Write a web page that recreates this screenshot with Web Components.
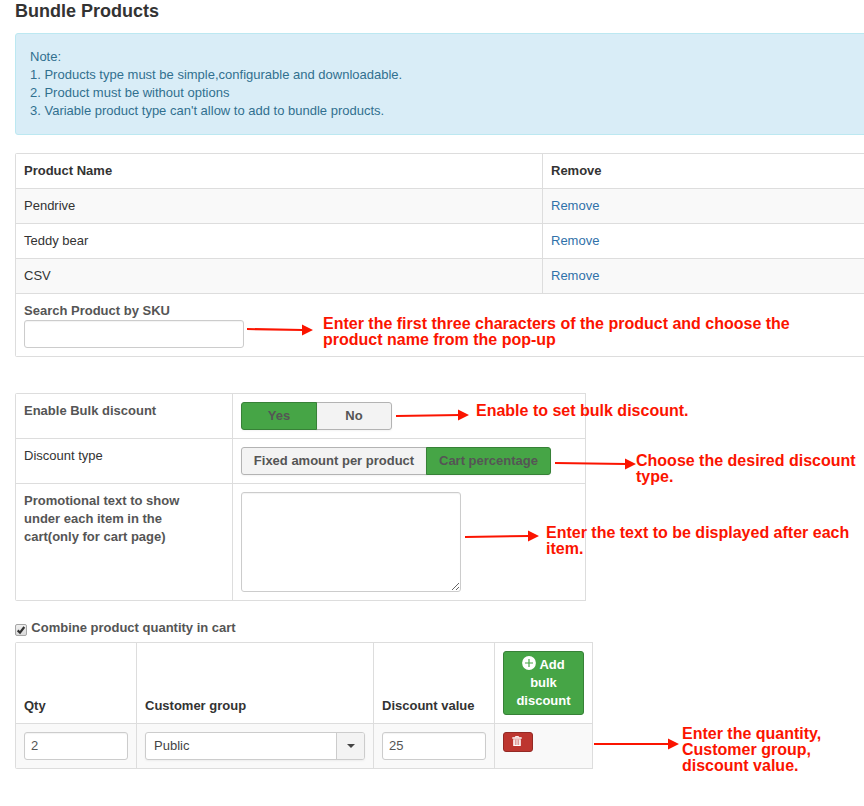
<!DOCTYPE html>
<html lang="en">
<head>
<meta charset="utf-8">
<title>Bundle Products</title>
<style>
html,body{margin:0;background:#fff;overflow:hidden}
body{font:13px/18px "Liberation Sans",Arial,sans-serif;color:#333;width:864px;height:806px}
</style>
</head>
<body>
<bundle-page></bundle-page>
<script>
const define=(name,html)=>{
  const t=document.createElement('template');t.innerHTML=html;
  customElements.define(name,class extends HTMLElement{
    constructor(){super();this.attachShadow({mode:'open'}).append(t.content.cloneNode(true));}
  });
};
define('note-alert',`<style>
:host{display:block;box-sizing:border-box;background:#d9edf7;border:1px solid #bce8f1;border-radius:3px;padding:14px;height:102px;color:#31708f}
</style><slot></slot>`);
define('line-grid',`<style>
:host{display:grid;gap:1px;padding:1px;background:#ddd;box-sizing:border-box;grid-template-columns:var(--cols);width:var(--grid-width);border-radius:2px 0 0 2px;overflow:hidden}
</style><slot></slot>`);
define('grid-cell',`<style>
:host{display:block;padding:8px;background:#fff;box-sizing:border-box}
:host([odd]){background:#f9f9f9}
:host([head]){font-weight:bold}
:host([label]){font-weight:bold;color:#555}
:host([bottom]){display:flex;align-items:flex-end}
:host([wide]){grid-column:1/-1}
</style><slot></slot>`);
define('remove-link',`<style>:host{color:#3071a9}</style><slot></slot>`);
define('text-box',`<style>
:host{display:block;box-sizing:border-box;width:var(--box-width,104px);height:28px;border:1px solid #ccc;border-radius:3px;background:#fff;padding:4px 6px;color:#555;box-shadow:inset 0 1px 1px rgba(0,0,0,.05)}
</style><slot></slot>`);
define('text-area',`<style>
:host{display:block;height:100px}
textarea{display:block;box-sizing:border-box;width:220px;height:100px;margin:0;border:1px solid #ccc;border-radius:3px;background:#fff;box-shadow:inset 0 1px 1px rgba(0,0,0,.05)}
</style><textarea></textarea>`);
define('toggle-group',`<style>:host{display:flex;height:28px}</style><slot></slot>`);
define('toggle-option',`<style>
:host{display:block;box-sizing:border-box;width:var(--option-width);height:28px;border:1px solid #b3b3b3;background:#f3f3f3;color:#555;font-weight:bold;text-align:center;line-height:26px;white-space:nowrap;box-shadow:0 1px 2px rgba(0,0,0,.05)}
:host([on]){background:#46a546;border-color:#378137;z-index:1}
:host([first]){border-radius:3px 0 0 3px}
:host([last]){border-radius:0 3px 3px 0;margin-left:-1px}
</style><slot></slot>`);
define('group-select',`<style>
:host{display:flex;box-sizing:border-box;width:220px;height:28px;border:1px solid #ccc;border-radius:3px;background:#fff;overflow:hidden;color:#444;box-shadow:0 1px 2px rgba(0,0,0,.05)}
.v{flex:1;padding:4px 8px}
.a{width:27px;border-left:1px solid #ccc;background:#f3f3f3;display:flex;align-items:center;justify-content:center}
</style><div class="v"><slot></slot></div><div class="a"><svg width="8" height="4"><path d="M0 0H8L4 4z" fill="#444"/></svg></div>`);
define('add-button',`<style>
:host{display:block;box-sizing:border-box;width:81px;height:64px;border:1px solid #378137;border-radius:3px;background:#46a546;color:#fff;padding:4px;text-align:center;font-weight:bold}
svg{vertical-align:-1px;margin-top:-3px}
.r{display:block;height:18px;white-space:nowrap}
</style><span class="r"><svg width="14" height="14" viewBox="0 0 14 14"><circle cx="7" cy="7" r="6.9" fill="#fff"/><path d="M7 3v8M3 7h8" stroke="#46a546" stroke-width="1.2"/></svg> Add</span><span class="r">bulk</span><span class="r">discount</span>`);
define('delete-button',`<style>
:host{display:flex;box-sizing:border-box;width:30px;height:20px;border:1px solid #942a25;border-radius:3px;background:#bd362f;justify-content:center;padding-top:3px;padding-right:2px}
</style><svg width="10" height="11" viewBox="0 0 10 11"><path d="M3.4 1.5V.6H6.6V1.5" fill="none" stroke="#fff"/><path d="M.3 1.2H9.7V2.8H.3zM1.2 3.2H8.8V10H1.2z" fill="#fff"/><path d="M3.3 3.6V9M5 3.6V9M6.7 3.6V9" stroke="#bd362f" stroke-width=".6"/></svg>`);
define('check-line',`<style>
:host{display:flex;height:18px;font-weight:bold;color:#555;gap:4.3px}
svg{margin-top:5px;flex:none}
</style><svg width="12" height="12" viewBox="0 0 12 12"><defs><linearGradient id="g" x2="0" y2="1"><stop stop-color="#f1f1f1"/><stop offset="1" stop-color="#d9d9d9"/></linearGradient></defs><rect x=".5" y=".5" width="11" height="11" rx="1.5" fill="url(#g)" stroke="#a6a6a6"/><path d="M2.7 6.4L5 8.7L9.3 3" fill="none" stroke="#333" stroke-width="2.2"/></svg><slot></slot>`);
define('call-out',`<style>
:host{position:absolute;font:bold 16px/16px "Liberation Sans",Arial,sans-serif;color:#fb1400;white-space:nowrap}
</style><slot></slot>`);
define('arrow-layer',`<style>:host{position:absolute;left:0;top:0;z-index:2}svg{display:block}</style>
<svg width="864" height="806" fill="#fb1400"><g stroke="#fb1400" stroke-width="2"><path d="M247 329L303 330"/><path d="M396 416L460 415"/><path d="M555 463L626 464"/><path d="M465 537L529 536"/><path d="M594 744H669"/></g>
<path d="M302 324.500L313 330L302 335.500zM458 409.500L469 415L458 420.500zM625 458.500L636 464L625 469.500zM528 530.500L539 536L528 541.500zM668 738.500L679 744L668 749.500z"/></svg>`);
define('bundle-page',`<style>
:host{display:block;position:relative;width:864px;height:806px;overflow:hidden;box-sizing:border-box;padding-left:15px}
h1{margin:0;font-size:18px;line-height:22px;height:33px}
note-alert,.p{width:900px}
.p{--grid-width:900px;--cols:526px 1fr;margin-top:18px}
.b{--grid-width:571px;--cols:216px 352px;margin-top:36px}
.q{--grid-width:578px;--cols:120px 236px 120px 97px;grid-template-rows:80px 44px;margin-top:5px}
check-line{margin-top:18px}
</style>
<h1>Bundle Products</h1>
<note-alert>Note:<br>1. Products type must be simple,configurable and downloadable.<br>2. Product must be without options<br>3. Variable product type can't allow to add to bundle products.</note-alert>
<line-grid class="p">
<grid-cell head>Product Name</grid-cell><grid-cell head>Remove</grid-cell>
<grid-cell odd>Pendrive</grid-cell><grid-cell odd><remove-link>Remove</remove-link></grid-cell>
<grid-cell>Teddy bear</grid-cell><grid-cell><remove-link>Remove</remove-link></grid-cell>
<grid-cell odd>CSV</grid-cell><grid-cell odd><remove-link>Remove</remove-link></grid-cell>
<grid-cell wide label>Search Product by SKU<text-box style="--box-width:220px"></text-box></grid-cell>
</line-grid>
<line-grid class="b">
<grid-cell label>Enable Bulk discount</grid-cell><grid-cell><toggle-group><toggle-option first on style="--option-width:76px">Yes</toggle-option><toggle-option last style="--option-width:76px">No</toggle-option></toggle-group></grid-cell>
<grid-cell>Discount type</grid-cell><grid-cell><toggle-group><toggle-option first style="--option-width:186px">Fixed amount per product</toggle-option><toggle-option last on style="--option-width:125px">Cart percentage</toggle-option></toggle-group></grid-cell>
<grid-cell label>Promotional text to show<br>under each item in the<br>cart(only for cart page)</grid-cell><grid-cell><text-area></text-area></grid-cell>
</line-grid>
<check-line>Combine product quantity in cart</check-line>
<line-grid class="q">
<grid-cell head bottom>Qty</grid-cell><grid-cell head bottom>Customer group</grid-cell><grid-cell head bottom>Discount value</grid-cell><grid-cell><add-button></add-button></grid-cell>
<grid-cell odd><text-box>2</text-box></grid-cell><grid-cell odd><group-select>Public</group-select></grid-cell><grid-cell odd><text-box>25</text-box></grid-cell><grid-cell odd><delete-button></delete-button></grid-cell>
</line-grid>
<arrow-layer></arrow-layer>
<call-out style="left:323px;top:316px">Enter the first three characters of the product and choose the<br>product name from the pop-up</call-out>
<call-out style="left:476px;top:403px">Enable to set bulk discount.</call-out>
<call-out style="left:636px;top:453px">Choose the desired discount<br>type.</call-out>
<call-out style="left:546px;top:525px">Enter the text to be displayed after each<br>item.</call-out>
<call-out style="left:682px;top:726px">Enter the quantity,<br>Customer group,<br>discount value.</call-out>`);
</script>
</body>
</html>
